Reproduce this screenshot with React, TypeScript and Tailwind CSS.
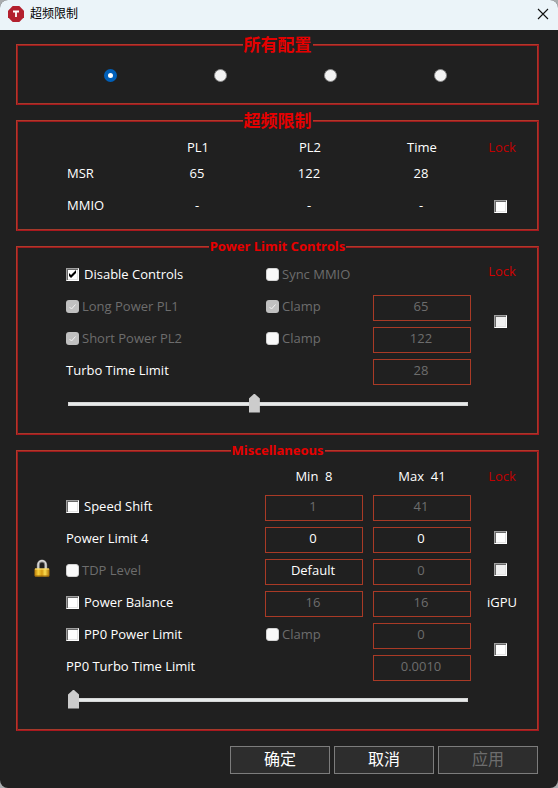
import React, { useId, useState } from "react";

type CheckProps = {
  label?: string;
  name?: string;
  checked?: boolean;
  disabled?: boolean;
  classic?: boolean;
};

function Check({ label, name, checked = false, disabled = false, classic = false }: CheckProps) {
  const id = useId();
  const [on, setOn] = useState(checked);
  const box = classic
    ? "border border-t-[#a0a0a0] border-l-[#a0a0a0] border-r-white border-b-white bg-white shadow-[inset_1px_1px_0_#696969,inset_-1px_-1px_0_#e3e3e3] disabled:bg-[#f0f0f0]"
    : on
      ? "rounded-[3px] bg-[#c0c0c0]"
      : "rounded-[3px] border border-[#d2d2d2] bg-[#fafafa]";
  return (
    <span className={`flex items-center ${classic ? "gap-[5px]" : "gap-[3px]"}`}>
      <span className="grid size-[13px] shrink-0">
        <input
          id={id}
          type="checkbox"
          aria-label={label ? undefined : name}
          checked={on}
          disabled={disabled}
          onChange={(e) => setOn(e.target.checked)}
          className={`col-start-1 row-start-1 size-[13px] appearance-none ${box}`}
        />
        {on && (
          <svg viewBox="0 0 13 13" className="pointer-events-none col-start-1 row-start-1 size-[13px]" fill="none">
            {classic ? (
              <path d="M3 5v3l2 2 5-5V2L5 7z" fill="#000" />
            ) : (
              <path d="M3.5 7l2 2 4-4.5" stroke="#f2f2f2" />
            )}
          </svg>
        )}
      </span>
      {label && (
        <label htmlFor={id} className={`whitespace-nowrap ${disabled ? "text-[#6d6d6d]" : "text-white"}`}>
          {label}
        </label>
      )}
    </span>
  );
}

function Field({ name, value, disabled = false }: { name: string; value: string; disabled?: boolean }) {
  return (
    <input
      type="text"
      aria-label={name}
      defaultValue={value}
      disabled={disabled}
      className="mt-1 h-[26px] w-full min-w-0 border border-[#a93a26] bg-transparent pr-0.5 pb-1 text-center text-white disabled:text-[#6d6d6d]"
    />
  );
}

function Group({ title, large = false, children }: { title: string; large?: boolean; children: React.ReactNode }) {
  return (
    <fieldset className="min-w-0 border border-t-[#b2382a] border-r-[#a8181e] border-b-[#a8181e] border-l-[#b2382a] shadow-[inset_1px_1px_0_#9c1a1e,inset_-1px_-1px_0_#a5382a]">
      <legend
        className={`mx-auto h-[21px] bg-[#202020] px-px font-['Noto_Sans','Noto_Sans_CJK_SC',sans-serif] font-bold leading-[21px] text-[#e60000] ${large ? "text-[17px]" : "text-[13px]"}`}
      >
        {title}
      </legend>
      {children}
    </fieldset>
  );
}

function Slider({ name, value }: { name: string; value: number }) {
  return (
    <div className="mt-2 mr-[55px] ml-0.5 flex">
      <input
        type="range"
        aria-label={name}
        min={0}
        max={1000}
        defaultValue={value}
        className="h-[19px] w-full appearance-none bg-transparent [&::-webkit-slider-runnable-track]:h-1 [&::-webkit-slider-runnable-track]:bg-[#e7eaea] [&::-webkit-slider-runnable-track]:shadow-[inset_0_0_0_1px_#d6d6d6] [&::-webkit-slider-thumb]:-mt-2 [&::-webkit-slider-thumb]:h-[19px] [&::-webkit-slider-thumb]:w-[11px] [&::-webkit-slider-thumb]:appearance-none [&::-webkit-slider-thumb]:bg-[#cccccc] [&::-webkit-slider-thumb]:[clip-path:polygon(50%_0,100%_5px,100%_100%,0_100%,0_5px)]"
      />
    </div>
  );
}

function LockText() {
  return <span className="text-center text-[#c00000]">Lock</span>;
}

function LockBox({ name, disabled = false, tall = false }: { name: string; disabled?: boolean; tall?: boolean }) {
  return (
    <span className={`flex items-center justify-center pr-[3px] pb-px ${tall ? "row-span-2 h-full" : ""}`}>
      <Check classic name={name} disabled={disabled} />
    </span>
  );
}

function Padlock() {
  return (
    <svg viewBox="0 0 16 18" className="mr-4 mb-1 -ml-8 h-[18px] w-4 shrink-0" fill="none" aria-hidden="true">
      <defs>
        <linearGradient id="gold" x1="0" x2="1" y1="0" y2="0">
          <stop offset="0" stopColor="#b87a08" />
          <stop offset="0.25" stopColor="#f7cf3a" />
          <stop offset="0.5" stopColor="#d59a12" />
          <stop offset="0.7" stopColor="#fbdc50" />
          <stop offset="1" stopColor="#a86c04" />
        </linearGradient>
      </defs>
      <path d="M4.3 10V5.7a3.7 3.7 0 0 1 7.4 0V10" stroke="#858585" strokeWidth="3" />
      <path d="M4.1 10V5.7a3.9 3.9 0 0 1 7.8 0V10" stroke="#dcdcdc" strokeWidth="1.4" />
      <rect x="0.5" y="9.5" width="15" height="8" rx="1" fill="url(#gold)" />
      <path d="M1 10h14" stroke="#ffe680" />
      <path d="M1 17h14" stroke="#9a6204" />
    </svg>
  );
}

const rowGrid =
  "grid auto-rows-[32px] grid-cols-[minmax(0,1fr)_98px_98px_42px] items-center gap-x-[10px]";

const limits = [
  ["MSR", "65", "122", "28"],
  ["MMIO", "-", "-", "-"],
];

export default function App() {
  const [profile, setProfile] = useState(0);
  return (
    <div className="bg-[#a9acae]">
      <div className="overflow-hidden rounded-lg bg-[#202020] font-['Open_Sans','Noto_Sans_CJK_SC',sans-serif] text-[13px] leading-5 text-white">
        <header className="flex h-[30px] items-center bg-[#ebf4f9] pr-[9px] pb-0.5 pl-2 text-black">
          <svg viewBox="0 0 16 16" className="size-4" aria-hidden="true">
            <path d="M4.7 0h6.6L16 4.7v6.6L11.3 16H4.7L0 11.3V4.7z" fill="#b3202e" />
            <path d="M5 5.5h6M8 5.5V11" stroke="#fff" strokeWidth="1.8" />
          </svg>
          <h1 className="ml-1.5 flex-1 text-xs">超频限制</h1>
          <button type="button" aria-label="关闭">
            <svg viewBox="0 0 12 12" className="size-3" stroke="#111" strokeWidth="1.1">
              <path d="M1 1l10 10M11 1L1 11" />
            </svg>
          </button>
        </header>

        <main className="flex flex-col gap-[5px] pt-1 pr-[19px] pb-[14px] pl-4">
          <Group title="所有配置" large>
            <div className="grid grid-cols-4 justify-items-center pt-[14px] pr-[43px] pb-[22px] pl-[38px]">
              {[0, 1, 2, 3].map((i) => (
                <input
                  key={i}
                  type="radio"
                  name="profile"
                  aria-label={`配置 ${i + 1}`}
                  checked={profile === i}
                  onChange={() => setProfile(i)}
                  className="size-[13px] appearance-none rounded-full border border-[#8a8a8a] bg-[#f3f3f3] checked:border-4 checked:border-[#005fb8] checked:bg-white"
                />
              ))}
            </div>
          </Group>

          <Group title="超频限制" large>
            <div className="pt-[3px] pr-3 pb-1.5 pl-[50px]">
              <table className="w-full table-fixed text-center">
                <thead>
                  <tr className="h-[26px]">
                    <td />
                    <th className="w-28 font-normal">PL1</th>
                    <th className="w-28 font-normal">PL2</th>
                    <th className="w-28 font-normal">Time</th>
                    <th className="w-12 font-normal text-[#c00000]">Lock</th>
                  </tr>
                </thead>
                <tbody>
                  {limits.map(([label, ...cells], r) => (
                    <tr key={label} className={r ? "h-[38px]" : "h-[26px]"}>
                      <th className="text-left font-normal">{label}</th>
                      {cells.map((c, i) => (
                        <td key={i} className="pr-0.5">{c}</td>
                      ))}
                      <td className="pt-1">{r === 1 && <LockBox name="Lock MMIO" />}</td>
                    </tr>
                  ))}
                </tbody>
              </table>
            </div>
          </Group>

          <Group title="Power Limit Controls">
            <div className="pt-px pr-[15px] pb-[21px] pl-[49px]">
              <div className={rowGrid}>
                <Check classic checked label="Disable Controls" />
                <span className="col-span-2 pl-px">
                  <Check disabled label="Sync MMIO" />
                </span>
                <span className="pb-1.5 text-center text-[#d00000]">Lock</span>

                <Check disabled checked label="Long Power PL1" />
                <span className="pl-px">
                  <Check disabled checked label="Clamp" />
                </span>
                <Field name="Long Power PL1" value="65" disabled />
                <LockBox name="Lock power limits" disabled tall />

                <Check disabled checked label="Short Power PL2" />
                <span className="pl-px">
                  <Check disabled label="Clamp" />
                </span>
                <Field name="Short Power PL2" value="122" disabled />

                <span className="col-span-2">Turbo Time Limit</span>
                <Field name="Turbo Time Limit" value="28" disabled />
              </div>
              <Slider name="Turbo Time Limit" value={465} />
            </div>
          </Group>

          <Group title="Miscellaneous">
            <div className="pr-[15px] pb-[21px] pl-[49px]">
              <div className="grid h-[29px] grid-cols-[minmax(0,1fr)_98px_98px_42px] items-center gap-x-[10px] text-center">
                <span />
                <span>Min&nbsp; 8</span>
                <span>Max&nbsp; 41</span>
                <LockText />
              </div>
              <div className={rowGrid}>
                <Check classic label="Speed Shift" />
                <Field name="Speed Shift Min" value="1" disabled />
                <Field name="Speed Shift Max" value="41" disabled />
                <span />

                <span>Power Limit 4</span>
                <Field name="Power Limit 4 Min" value="0" />
                <Field name="Power Limit 4 Max" value="0" />
                <LockBox name="Lock Power Limit 4" />

                <span className="flex items-center">
                  <Padlock />
                  <Check disabled label="TDP Level" />
                </span>
                <Field name="TDP Level" value="Default" />
                <Field name="TDP Level value" value="0" disabled />
                <LockBox name="Lock TDP Level" disabled />

                <Check classic label="Power Balance" />
                <Field name="Power Balance CPU" value="16" disabled />
                <Field name="Power Balance iGPU" value="16" disabled />
                <span className="text-center">iGPU</span>

                <Check classic label="PP0 Power Limit" />
                <span className="pl-px">
                  <Check disabled label="Clamp" />
                </span>
                <Field name="PP0 Power Limit" value="0" disabled />
                <LockBox name="Lock PP0" tall />

                <span className="col-span-2">PP0 Turbo Time Limit</span>
                <Field name="PP0 Turbo Time Limit" value="0.0010" disabled />
              </div>
              <Slider name="PP0 Turbo Time Limit" value={0} />
            </div>
          </Group>

          <footer className="mt-[10px] mr-px flex justify-end gap-1 text-base">
            <button type="button" className="h-7 w-[100px] border border-[#7c7c7c] bg-[#2d2d2d] pb-1 leading-6">
              确定
            </button>
            <button type="button" className="h-7 w-[100px] border border-[#7c7c7c] bg-[#2d2d2d] pb-1 leading-6">
              取消
            </button>
            <button
              type="button"
              disabled
              className="h-7 w-[100px] border border-[#7c7c7c] bg-[#2d2d2d] pb-1 leading-6 text-[#6d6d6d]"
            >
              应用
            </button>
          </footer>
        </main>
      </div>
    </div>
  );
}
